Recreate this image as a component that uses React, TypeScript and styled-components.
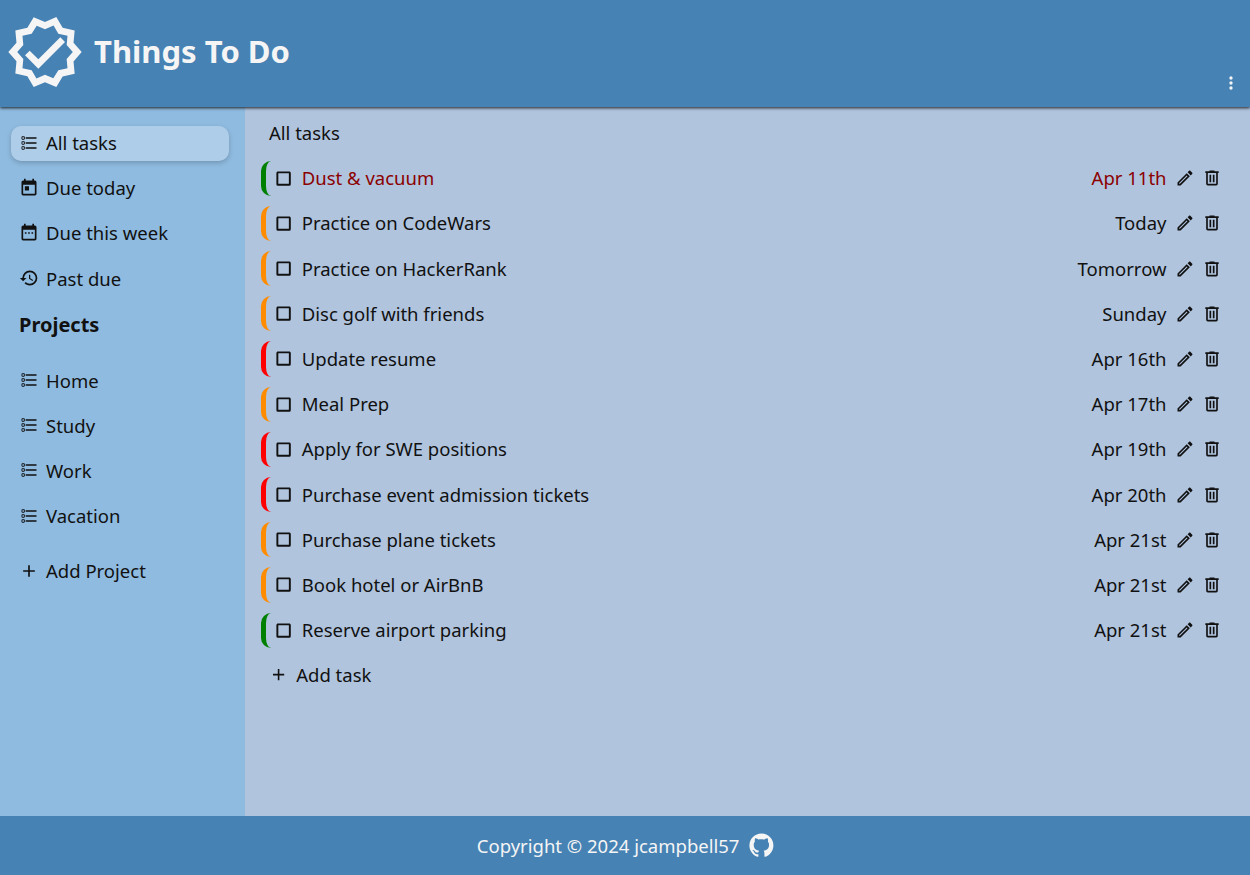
import styled, { createGlobalStyle } from "styled-components";

const paths = {
  logo: "M23 12L20.56 9.22L20.9 5.54L17.29 4.72L15.4 1.5L12 3L8.6 1.54L6.71 4.72L3.1 5.53L3.44 9.21L1 12L3.44 14.78L3.1 18.47L6.71 19.29L8.6 22.5L12 21.04L15.4 22.5L17.29 19.32L20.9 18.5L20.56 14.82L23 12M18.49 14.09L18.75 16.88L16 17.5L14.5 19.91L12 18.83L9.43 19.95L8 17.5L5.24 16.89L5.5 14.08L3.66 12L5.5 9.89L5.24 7.11L8 6.5L9.5 4.09L12 5.17L14.57 4.05L16 6.5L18.75 7.12L18.5 9.91L20.34 12L18.49 14.09ZM16.59 7.58L10 14.17L7.41 11.59L6 13L10 17L18 9L16.59 7.58Z",
  list: "M21,19V17H8V19H21M21,13V11H8V13H21M8,7H21V5H8V7M4,5V7H6V5H4M3,5A1,1 0 0,1 4,4H6A1,1 0 0,1 7,5V7A1,1 0 0,1 6,8H4A1,1 0 0,1 3,7V5M4,11V13H6V11H4M3,11A1,1 0 0,1 4,10H6A1,1 0 0,1 7,11V13A1,1 0 0,1 6,14H4A1,1 0 0,1 3,13V11M4,17V19H6V17H4M3,17A1,1 0 0,1 4,16H6A1,1 0 0,1 7,17V19A1,1 0 0,1 6,20H4A1,1 0 0,1 3,19V17Z",
  today: "M7,10H12V15H7M19,19H5V8H19M19,3H18V1H16V3H8V1H6V3H5C3.89,3 3,3.9 3,5V19A2,2 0 0,0 5,21H19A2,2 0 0,0 21,19V5A2,2 0 0,0 19,3Z",
  week: "M19,19H5V8H19M19,3H18V1H16V3H8V1H6V3H5C3.89,3 3,3.9 3,5V19A2,2 0 0,0 5,21H19A2,2 0 0,0 21,19V5A2,2 0 0,0 19,3M7,11H9V13H7V11M11,11H13V13H11V11M15,11H17V13H15V11Z",
  history: "M13.5,8H12V13L16.28,15.54L17,14.33L13.5,12.25V8M13,3A9,9 0 0,0 4,12H1L4.96,16.03L9,12H6A7,7 0 0,1 13,5A7,7 0 0,1 20,12A7,7 0 0,1 13,19C11.07,19 9.32,18.21 8.06,16.94L6.64,18.36C8.27,20 10.5,21 13,21A9,9 0 0,0 22,12A9,9 0 0,0 13,3",
  plus: "M19,13H13V19H11V13H5V11H11V5H13V11H19V13Z",
  box: "M19,3H5C3.89,3 3,3.89 3,5V19A2,2 0 0,0 5,21H19A2,2 0 0,0 21,19V5C21,3.89 20.1,3 19,3M18.6,5.4V18.6H5.4V5.4H18.6Z",
  pencil: "M14.06,9L15,9.94L5.92,19H5V18.08L14.06,9M17.66,3C17.41,3 17.15,3.1 16.96,3.29L15.13,5.12L18.88,8.87L20.71,7.04C21.1,6.65 21.1,6 20.71,5.63L18.37,3.29C18.17,3.09 17.92,3 17.66,3M14.06,6.19L3,17.25V21H6.75L17.81,9.94L14.06,6.19Z",
  trash: "M9,3V4H4V6H5V19A2,2 0 0,0 7,21H17A2,2 0 0,0 19,19V6H20V4H15V3H9M7,6H17V19H7V6M9,8V17H11V8H9M13,8V17H15V8H13Z",
  dots: "M12,16A2,2 0 0,1 14,18A2,2 0 0,1 12,20A2,2 0 0,1 10,18A2,2 0 0,1 12,16M12,10A2,2 0 0,1 14,12A2,2 0 0,1 12,14A2,2 0 0,1 10,12A2,2 0 0,1 12,10M12,4A2,2 0 0,1 14,6A2,2 0 0,1 12,8A2,2 0 0,1 10,6A2,2 0 0,1 12,4Z",
  github: "M12,2A10,10 0 0,0 2,12C2,16.42 4.87,20.17 8.84,21.5C9.34,21.58 9.5,21.27 9.5,21C9.5,20.77 9.5,20.14 9.5,19.31C6.73,19.91 6.14,17.97 6.14,17.97C5.68,16.81 5.03,16.5 5.03,16.5C4.12,15.88 5.1,15.9 5.1,15.9C6.1,15.97 6.63,16.93 6.63,16.93C7.5,18.45 8.97,18 9.54,17.76C9.63,17.11 9.89,16.67 10.17,16.42C7.95,16.17 5.62,15.31 5.62,11.5C5.62,10.39 6,9.5 6.65,8.79C6.55,8.54 6.2,7.5 6.75,6.15C6.75,6.15 7.59,5.88 9.5,7.17C10.29,6.95 11.15,6.84 12,6.84C12.85,6.84 13.71,6.95 14.5,7.17C16.41,5.88 17.25,6.15 17.25,6.15C17.8,7.5 17.45,8.54 17.35,8.79C18,9.5 18.38,10.39 18.38,11.5C18.38,15.32 16.04,16.16 13.81,16.41C14.17,16.72 14.5,17.33 14.5,18.26C14.5,19.6 14.5,20.68 14.5,21C14.5,21.27 14.66,21.59 15.17,21.5C19.14,20.16 22,16.42 22,12A10,10 0 0,0 12,2Z",
};

type IconName = keyof typeof paths;

function Icon({ name, size = 20 }: { name: IconName; size?: number }) {
  return (
    <IconSvg viewBox="0 0 24 24" width={size} height={size} fill="currentColor">
      <path d={paths[name]} />
    </IconSvg>
  );
}

const views: { label: string; icon: IconName; active?: boolean }[] = [
  { label: "All tasks", icon: "list", active: true },
  { label: "Due today", icon: "today" },
  { label: "Due this week", icon: "week" },
  { label: "Past due", icon: "history" },
];

const projects = ["Home", "Study", "Work", "Vacation"];

const tasks = [
  { title: "Dust & vacuum", due: "Apr 11th", priority: "green", overdue: true },
  { title: "Practice on CodeWars", due: "Today", priority: "darkorange" },
  { title: "Practice on HackerRank", due: "Tomorrow", priority: "darkorange" },
  { title: "Disc golf with friends", due: "Sunday", priority: "darkorange" },
  { title: "Update resume", due: "Apr 16th", priority: "red" },
  { title: "Meal Prep", due: "Apr 17th", priority: "darkorange" },
  { title: "Apply for SWE positions", due: "Apr 19th", priority: "red" },
  { title: "Purchase event admission tickets", due: "Apr 20th", priority: "red" },
  { title: "Purchase plane tickets", due: "Apr 21st", priority: "darkorange" },
  { title: "Book hotel or AirBnB", due: "Apr 21st", priority: "darkorange" },
  { title: "Reserve airport parking", due: "Apr 21st", priority: "green" },
];

export default function App() {
  return (
    <>
      <GlobalStyle />
      <Page>
        <Header>
          <Brand>
            <Icon name="logo" size={80} />
            <Title>Things To Do</Title>
          </Brand>
          <MenuButton>
            <Icon name="dots" />
          </MenuButton>
        </Header>
        <Body>
          <Sidebar>
            {views.map((v) => (
              <NavItem key={v.label} $active={v.active}>
                <Icon name={v.icon} />
                {v.label}
              </NavItem>
            ))}
            <ProjectsHeading>Projects</ProjectsHeading>
            {projects.map((p) => (
              <NavItem key={p}>
                <Icon name="list" />
                {p}
              </NavItem>
            ))}
            <AddProject>
              <Icon name="plus" />
              Add Project
            </AddProject>
          </Sidebar>
          <Main>
            <ViewTitle>All tasks</ViewTitle>
            {tasks.map((t) => (
              <TaskRow key={t.title} $priority={t.priority}>
                <Icon name="box" size={19.2} />
                <TaskTitle $overdue={t.overdue}>{t.title}</TaskTitle>
                <DueDate $overdue={t.overdue}>{t.due}</DueDate>
                <ActionIcons>
                  <Icon name="pencil" />
                  <Icon name="trash" />
                </ActionIcons>
              </TaskRow>
            ))}
            <AddTask>
              <Icon name="plus" size={19.2} />
              Add task
            </AddTask>
          </Main>
        </Body>
        <Footer>
          Copyright © 2024 jcampbell57
          <Icon name="github" size={28.8} />
        </Footer>
      </Page>
    </>
  );
}

const GlobalStyle = createGlobalStyle`
  * {
    box-sizing: border-box;
  }
  body {
    margin: 0;
    font-family: "Noto Sans", "Open Sans", sans-serif;
    font-size: 18.5px;
    color: #111111;
  }
`;

const IconSvg = styled.svg`
  flex: none;
  display: block;
`;

const Page = styled.div`
  height: 100vh;
  display: grid;
  grid-template-rows: 106.5px 1fr 59px;
`;

const Header = styled.header`
  background: #4682b4;
  color: #f5f5f5;
  display: flex;
  justify-content: space-between;
  padding: 12px 8px 0 5px;
  box-shadow: 0 1px 3px rgba(0, 0, 0, 0.85);
  z-index: 2;
`;

const Brand = styled.div`
  display: flex;
  align-items: center;
  gap: 9px;
  height: 80px;
`;

const Title = styled.h1`
  margin: 0 0 2px;
  font-size: 31px;
  font-weight: 700;
`;

const MenuButton = styled.div`
  align-self: flex-end;
  margin: 0 1px 14px 0;
`;

const Body = styled.div`
  display: grid;
  grid-template-columns: 245px 1fr;
  min-height: 0;
`;

const Sidebar = styled.nav`
  background: #8fbbe0;
  padding: 19px 16px 0 11px;
  display: flex;
  flex-direction: column;
  gap: 10px;
`;

const NavItem = styled.div<{ $active?: boolean }>`
  height: 35.2px;
  display: flex;
  align-items: center;
  gap: 7px;
  padding: 0 0 1px 8px;
  border-radius: 10px;
  background: ${(p) => (p.$active ? "#aecde8" : "transparent")};
  box-shadow: ${(p) => (p.$active ? "0 2px 5px rgba(0, 0, 0, 0.2)" : "none")};
`;

const ProjectsHeading = styled.h2`
  margin: 0 0 11.5px;
  padding: 2px 0 0 8px;
  height: 35.2px;
  display: flex;
  align-items: center;
  font-size: 20px;
  font-weight: 700;
`;

const AddProject = styled(NavItem)`
  margin-top: 10px;
`;

const Main = styled.main`
  background: #b0c4de;
  padding: 9px 28.5px 0 16px;
  display: flex;
  flex-direction: column;
  gap: 10px;
`;

const ViewTitle = styled.div`
  height: 35.2px;
  display: flex;
  align-items: center;
  padding: 0 0 1px 8px;
`;

const TaskRow = styled.div<{ $priority: string }>`
  height: 35.2px;
  display: flex;
  align-items: center;
  padding-left: 8px;
  border-left: 5px solid ${(p) => p.$priority};
  border-radius: 10px;
`;

const TaskTitle = styled.span<{ $overdue?: boolean }>`
  flex: 1;
  margin: 0 0 1px 8.6px;
  color: ${(p) => (p.$overdue ? "#8b0000" : "inherit")};
`;

const DueDate = styled.span<{ $overdue?: boolean }>`
  margin-bottom: 1px;
  color: ${(p) => (p.$overdue ? "#8b0000" : "inherit")};
`;

const ActionIcons = styled.div`
  display: flex;
  gap: 7px;
  margin-left: 8px;
`;

const AddTask = styled.div`
  height: 35.2px;
  display: flex;
  align-items: center;
  gap: 8px;
  padding: 0 0 1px 8px;
`;

const Footer = styled.footer`
  background: #4682b4;
  color: #f5f5f5;
  display: flex;
  align-items: center;
  justify-content: center;
  gap: 8px;
  padding-left: 3px;
`;
